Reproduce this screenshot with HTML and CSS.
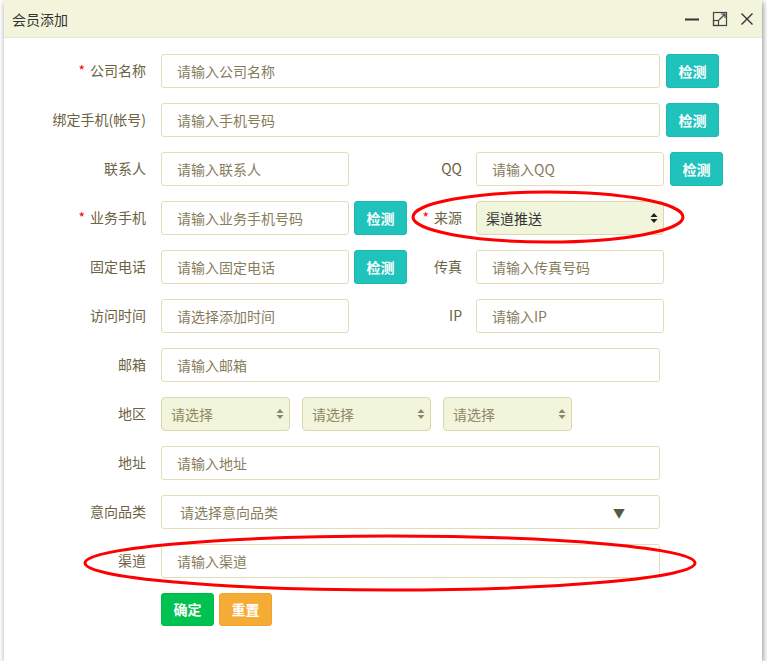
FILE: index.html
```html
<!DOCTYPE html>
<html lang="zh-CN">
<head>
<meta charset="utf-8">
<title>会员添加</title>
<link rel="stylesheet" href="styles.css">
</head>
<body>
<div class="dialog">
  <div class="dlg-head">
    <span class="dlg-title">会员添加</span>
    <div class="dlg-tools">
      <svg class="tool" width="16" height="16" viewBox="0 0 16 16"><path d="M1 8.5 H15" stroke="#333" stroke-width="2"/></svg>
      <svg class="tool" width="16" height="16" viewBox="0 0 16 16" fill="none" stroke="#444" stroke-width="1.2"><rect x="1.5" y="1.5" width="13" height="13"/><rect x="1.5" y="9.5" width="5" height="5"/><path d="M7 9 L13 3 M9 3 H13 V7"/></svg>
      <svg class="tool" width="16" height="16" viewBox="0 0 16 16" fill="none" stroke="#333" stroke-width="1.4"><path d="M2.5 2.5 L13.5 13.5 M13.5 2.5 L2.5 13.5"/></svg>
    </div>
  </div>

  <form class="form">
    <div class="row">
      <label class="lbl"><i class="req">*</i>公司名称</label>
      <input class="ipt wide" placeholder="请输入公司名称">
      <button type="button" class="btn check">检测</button>
    </div>
    <div class="row">
      <label class="lbl">绑定手机(帐号)</label>
      <input class="ipt wide" placeholder="请输入手机号码">
      <button type="button" class="btn check">检测</button>
    </div>
    <div class="row">
      <label class="lbl">联系人</label>
      <input class="ipt half" placeholder="请输入联系人">
      <div class="slot"></div>
      <label class="lbl2">QQ</label>
      <input class="ipt half" placeholder="请输入QQ">
      <button type="button" class="btn check">检测</button>
    </div>
    <div class="row">
      <label class="lbl"><i class="req">*</i>业务手机</label>
      <input class="ipt half" placeholder="请输入业务手机号码">
      <div class="slot"><button type="button" class="btn check">检测</button></div>
      <label class="lbl2"><i class="req">*</i>来源</label>
      <div class="sel half src">
        <span class="sel-val">渠道推送</span>
        <svg class="updown" width="8" height="12" viewBox="0 0 8 12"><path d="M4 1 L7.5 5 H0.5 Z M4 11 L7.5 7 H0.5 Z" fill="#222"/></svg>
      </div>
    </div>
    <div class="row">
      <label class="lbl">固定电话</label>
      <input class="ipt half" placeholder="请输入固定电话">
      <div class="slot"><button type="button" class="btn check">检测</button></div>
      <label class="lbl2">传真</label>
      <input class="ipt half" placeholder="请输入传真号码">
    </div>
    <div class="row">
      <label class="lbl">访问时间</label>
      <input class="ipt half" placeholder="请选择添加时间">
      <div class="slot"></div>
      <label class="lbl2">IP</label>
      <input class="ipt half" placeholder="请输入IP">
    </div>
    <div class="row">
      <label class="lbl">邮箱</label>
      <input class="ipt wide" placeholder="请输入邮箱">
    </div>
    <div class="row">
      <label class="lbl">地区</label>
      <div class="areas">
        <div class="sel area"><span class="sel-ph">请选择</span><svg class="updown" width="8" height="12" viewBox="0 0 8 12"><path d="M4 1 L7.5 5 H0.5 Z M4 11 L7.5 7 H0.5 Z" fill="#8f8866"/></svg></div>
        <div class="sel area"><span class="sel-ph">请选择</span><svg class="updown" width="8" height="12" viewBox="0 0 8 12"><path d="M4 1 L7.5 5 H0.5 Z M4 11 L7.5 7 H0.5 Z" fill="#8f8866"/></svg></div>
        <div class="sel area"><span class="sel-ph">请选择</span><svg class="updown" width="8" height="12" viewBox="0 0 8 12"><path d="M4 1 L7.5 5 H0.5 Z M4 11 L7.5 7 H0.5 Z" fill="#8f8866"/></svg></div>
      </div>
    </div>
    <div class="row">
      <label class="lbl">地址</label>
      <input class="ipt wide" placeholder="请输入地址">
    </div>
    <div class="row">
      <label class="lbl">意向品类</label>
      <div class="combo wide">
        <span class="combo-ph">请选择意向品类</span>
        <span class="combo-arrow">▼</span>
      </div>
    </div>
    <div class="row">
      <label class="lbl">渠道</label>
      <input class="ipt wide" placeholder="请输入渠道">
    </div>
    <div class="row actions">
      <button type="button" class="btn ok">确定</button>
      <button type="button" class="btn reset">重置</button>
    </div>
  </form>

  <svg class="marks" width="758" height="661" viewBox="0 0 758 661">
    <ellipse cx="544" cy="217" rx="135" ry="25" fill="none" stroke="#f00" stroke-width="3"/>
    <ellipse cx="386" cy="563" rx="305" ry="27" fill="none" stroke="#f00" stroke-width="3"/>
  </svg>
</div>
</body>
</html>
```

FILE: styles.css
```css
* { box-sizing: border-box; }
html, body { margin: 0; padding: 0; background: #fff; }
body {
  font-family: "Noto Sans CJK SC", "Noto Sans", "Liberation Sans", sans-serif;
  font-size: 14px;
  color: #333;
}
.dialog {
  position: relative;
  margin-left: 4px;
  width: 758px;
  height: 661px;
  background: #fff;
  box-shadow: 1px 2px 6px rgba(0, 0, 0, 0.45);
}
.dlg-head {
  height: 38px;
  background: #f2f5dc;
  border-bottom: 1px solid #e4e8c6;
  display: flex;
  align-items: center;
  justify-content: space-between;
  padding: 0 7px 0 8px;
}
.dlg-title { font-size: 14px; color: #333; line-height: 1; }
.dlg-tools { display: flex; align-items: center; gap: 11px; }
.tool { display: block; }
.tool:first-child { margin-right: 1px; }

.form {
  padding: 16px 0 0 0;
  display: flex;
  flex-direction: column;
  gap: 15px;
}
.row {
  display: flex;
  align-items: center;
  height: 34px;
}
.lbl {
  width: 142px;
  margin-right: 15px;
  text-align: right;
  color: #6c6243;
  font-size: 14px;
  line-height: 1;
  padding-bottom: 2px;
  white-space: nowrap;
}
.lbl2 {
  width: 54px;
  margin-right: 14px;
  text-align: right;
  color: #6c6243;
  font-size: 14px;
  line-height: 1;
  padding-bottom: 2px;
  white-space: nowrap;
}
.req {
  font-style: normal;
  color: #f00;
  margin-right: 5px;
}
.ipt {
  height: 34px;
  border: 1px solid #e2ddb6;
  border-radius: 3px;
  padding: 0 15px 1px;
  font-family: inherit;
  font-size: 14px;
  color: #333;
  background: #fff;
  outline: none;
}
.ipt::placeholder { color: #877d5c; }
.wide { width: 499px; }
.half { width: 188px; }
.slot { width: 59px; height: 34px; display: flex; align-items: center; }
.slot .btn { margin-left: 5px; }

.btn {
  height: 34px;
  width: 53px;
  border: none;
  border-radius: 3px;
  color: #fff;
  font-family: inherit;
  font-size: 14px;
  font-weight: bold;
  padding: 0 0 1px;
}
.row > .check { margin-left: 6px; }
.check { background: #1fc3bc; border: 1px solid #1db8b1; }

.sel {
  position: relative;
  height: 34px;
  border: 1px solid #dcd7ad;
  border-radius: 4px;
  background: #f1f5dc;
  display: flex;
  align-items: center;
  padding-bottom: 1px;
}
.src { padding-left: 9px; }
.sel-val { color: #333; font-weight: normal; }
.updown { position: absolute; right: 5px; top: 10px; }
.areas { display: flex; gap: 12px; }
.area { width: 129px; padding-left: 9px; }
.sel-ph { color: #8f8866; }

.combo {
  position: relative;
  height: 34px;
  border: 1px solid #e2ddb6;
  border-radius: 3px;
  display: flex;
  align-items: center;
  padding-left: 18px;
  padding-bottom: 1px;
}
.combo-ph { color: #877d5c; }
.combo-arrow {
  position: absolute;
  right: 34px;
  top: 8px;
  font-size: 12px;
  color: #555a48;
}

.actions { padding-left: 157px; gap: 5px; height: 33px; }
.actions .btn { height: 33px; }
.ok { background: #00c250; border: 1px solid #00b84c; }
.reset { background: #f5ac36; border: 1px solid #f0a22a; }

.marks {
  position: absolute;
  left: 0;
  top: 0;
  pointer-events: none;
}
```
